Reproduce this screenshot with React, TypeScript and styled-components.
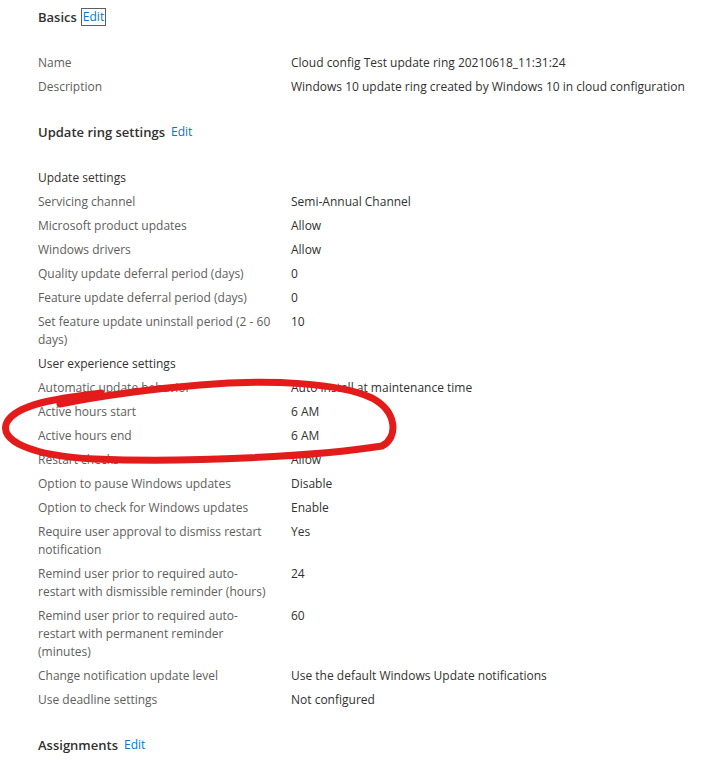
import styled, { createGlobalStyle } from "styled-components";


interface Row {
    label: string;
    value?: string;
    group?: boolean;
}


interface SectionData {
    title: string;
    focused?: boolean;
    rows: Row[];
}


const sections: SectionData[] = [
    {
        title: "Basics",
        focused: true,
        rows: [
            { label: "Name", value: "Cloud config Test update ring 20210618_11:31:24" },
            { label: "Description", value: "Windows 10 update ring created by Windows 10 in cloud configuration" },
        ],
    },
    {
        title: "Update ring settings",
        rows: [
            { label: "Update settings", group: true },
            { label: "Servicing channel", value: "Semi-Annual Channel" },
            { label: "Microsoft product updates", value: "Allow" },
            { label: "Windows drivers", value: "Allow" },
            { label: "Quality update deferral period (days)", value: "0" },
            { label: "Feature update deferral period (days)", value: "0" },
            { label: "Set feature update uninstall period (2 - 60 days)", value: "10" },
            { label: "User experience settings", group: true },
            { label: "Automatic update behavior", value: "Auto install at maintenance time" },
            { label: "Active hours start", value: "6 AM" },
            { label: "Active hours end", value: "6 AM" },
            { label: "Restart checks", value: "Allow" },
            { label: "Option to pause Windows updates", value: "Disable" },
            { label: "Option to check for Windows updates", value: "Enable" },
            { label: "Require user approval to dismiss restart notification", value: "Yes" },
            { label: "Remind user prior to required auto-restart with dismissible reminder (hours)", value: "24" },
            { label: "Remind user prior to required auto-restart with permanent reminder (minutes)", value: "60" },
            { label: "Change notification update level", value: "Use the default Windows Update notifications" },
            { label: "Use deadline settings", value: "Not configured" },
        ],
    },
    {
        title: "Assignments",
        rows: [],
    },
];


export default function App() {
    // render
    return (
        <>
            <GlobalStyle />
            <Page>
                {sections.map((section) => (
                    <Section key={section.title}>
                        <Header>
                            <Title>{section.title}</Title>
                            <EditLink $focused={section.focused}>{"Edit"}</EditLink>
                        </Header>
                        {section.rows.length > 0 &&
                            <Table>
                                {section.rows.map((row) => (
                                    <TableRow key={row.label}>
                                        <Label $group={row.group}>{row.label}</Label>
                                        <Value>{row.value ?? ""}</Value>
                                    </TableRow>
                                ))}
                            </Table>
                        }
                    </Section>
                ))}
                <Scribble viewBox="0 0 712 770" aria-hidden="true">
                    <path
                        d="M 101 393 C 70 397, 18 402, 7 422 C -2 440, 30 456, 95 459 C 190 463, 320 456, 382 446 C 398 438, 398 412, 372 398 C 340 383, 270 379, 200 385 C 140 390, 90 398, 60 404"
                        fill="none"
                        stroke="#e41b1b"
                        strokeWidth="7"
                        strokeLinecap="round"
                        strokeLinejoin="round"
                    />
                </Scribble>
            </Page>
        </>
    );
}


const GlobalStyle = createGlobalStyle`
    html, body {
        margin: 0;
        background: #ffffff;
    }
    body {
        font-family: "Open Sans", "Noto Sans", "Liberation Sans", sans-serif;
        font-size: 12px;
        color: #323130;
    }
`;

const Page = styled.div`
    position: relative;
    width: 712px;
    min-height: 770px;
    padding: 7px 0 0 38px;
    box-sizing: border-box;
    overflow: hidden;
`;

const Section = styled.section`
    margin-bottom: 24px;
`;

const Header = styled.div`
    display: flex;
    align-items: center;
    gap: 5px;
    height: 20px;
`;

const Title = styled.h2`
    margin: 0;
    font-size: 13px;
    font-weight: 600;
    color: #323130;
`;

const EditLink = styled.span<{ $focused?: boolean }>`
    font-size: 12px;
    color: #0078d4;
    cursor: pointer;
    padding: 0 1px;
    line-height: 16px;
    outline: ${(p) => (p.$focused ? "1px solid #605e5c" : "none")};
`;

const Table = styled.div`
    margin-top: 23px;
    display: flex;
    flex-direction: column;
`;

const TableRow = styled.div`
    display: grid;
    grid-template-columns: 253px 1fr;
    padding: 4px 0 2px;
    line-height: 18px;
`;

const Label = styled.div<{ $group?: boolean }>`
    padding-right: 18px;
    color: ${(p) => (p.$group ? "#323130" : "#605e5c")};
`;

const Value = styled.div`
    color: #323130;
    white-space: nowrap;
`;

const Scribble = styled.svg`
    position: absolute;
    top: 0;
    left: 0;
    width: 712px;
    height: 770px;
    pointer-events: none;
`;
